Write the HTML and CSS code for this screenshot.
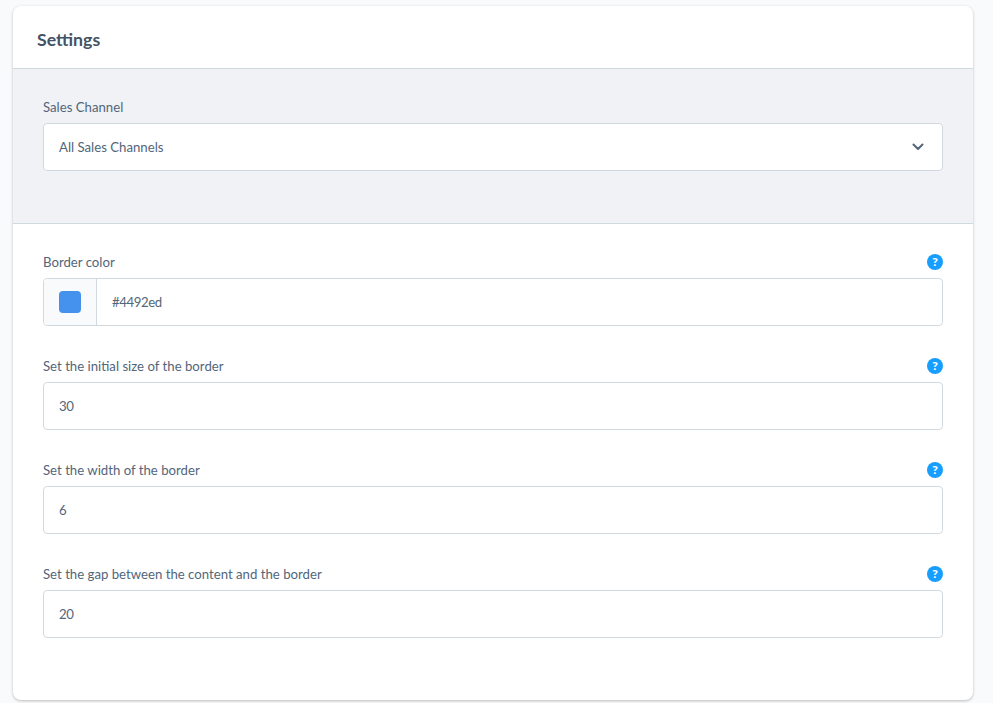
FILE: index.html
```html
<!DOCTYPE html>
<html lang="en">

<head>
    <meta charset="UTF-8">
    <meta name="viewport" content="width=device-width, initial-scale=1.0">
    <title>Settings</title>
    <link rel="stylesheet" href="styles.css">
</head>

<body>
    <div class="card">
        <div class="card-header">
            <h2>Settings</h2>
        </div>

        <div class="card-section section-grey">
            <div class="field">
                <div class="field-label">
                    <label for="salesChannel">Sales Channel</label>
                </div>
                <div class="field-box select-box">
                    <span id="salesChannel" class="field-value">All Sales Channels</span>
                    <svg class="chevron" width="12" height="8" viewBox="0 0 12 8">
                        <path d="M1.5 1.5 6 6l4.5-4.5" fill="none" stroke="#52667a" stroke-width="2" stroke-linecap="round" stroke-linejoin="round"/>
                    </svg>
                </div>
            </div>
        </div>

        <div class="card-section">
            <div class="field">
                <div class="field-label">
                    <label for="borderColor">Border color</label>
                    <span class="help">?</span>
                </div>
                <div class="field-box">
                    <div class="color-prefix"><span class="swatch"></span></div>
                    <span id="borderColor" class="field-value number">#4492ed</span>
                </div>
            </div>
            <div class="field">
                <div class="field-label">
                    <label for="initialSize">Set the initial size of the border</label>
                    <span class="help">?</span>
                </div>
                <div class="field-box">
                    <span id="initialSize" class="field-value number">30</span>
                </div>
            </div>
            <div class="field">
                <div class="field-label">
                    <label for="borderWidth">Set the width of the border</label>
                    <span class="help">?</span>
                </div>
                <div class="field-box">
                    <span id="borderWidth" class="field-value number">6</span>
                </div>
            </div>
            <div class="field">
                <div class="field-label">
                    <label for="borderGap">Set the gap between the content and the border</label>
                    <span class="help">?</span>
                </div>
                <div class="field-box">
                    <span id="borderGap" class="field-value number">20</span>
                </div>
            </div>
        </div>
    </div>
</body>

</html>
```

FILE: styles.css
```css
html,
body {
    height: 703px;
    overflow: hidden;
}

body {
    font-family: Lato, "Open Sans", sans-serif;
    font-size: 13.2px;
    color: #52667a;
    margin: 0;
    padding: 6px 20px 0 13px;
    box-sizing: border-box;
    background-color: #f9fafb;
}

.card {
    background-color: white;
    border-radius: 8px;
    box-shadow: 0 1px 3px rgba(0, 0, 0, 0.25);
    overflow: hidden;
}

.card-header {
    height: 63px;
    box-sizing: border-box;
    padding: 5px 24px 0;
    display: flex;
    align-items: center;
    border-bottom: 1px solid #d1d9e0;
}

h2 {
    margin: 0;
    font-size: 17.7px;
    font-weight: 700;
    color: #435366;
}

.card-section {
    padding: 30px;
}

.section-grey {
    padding-bottom: 20px;
    background-color: #f0f2f5;
    border-bottom: 1px solid #d1d9e0;
}

.field {
    margin-bottom: 32px;
}

.field-label {
    display: flex;
    justify-content: space-between;
    align-items: center;
    height: 16px;
    margin-bottom: 8px;
    line-height: 16px;
}

.help {
    width: 16px;
    height: 16px;
    border-radius: 50%;
    background-color: #189eff;
    color: white;
    font-size: 12px;
    font-weight: 900;
    text-align: center;
    line-height: 16px;
}

.field-box {
    display: flex;
    align-items: center;
    height: 48px;
    box-sizing: border-box;
    background-color: white;
    border: 1px solid #d1d9e0;
    border-radius: 4px;
    overflow: hidden;
}

.select-box {
    justify-content: space-between;
    padding-right: 18px;
}

.field-value {
    padding: 0 0 1px 15px;
}

.number {
    letter-spacing: -0.4px;
}

.color-prefix {
    width: 53px;
    height: 100%;
    box-sizing: border-box;
    display: flex;
    align-items: center;
    justify-content: center;
    background-color: #f9fafb;
    border-right: 1px solid #d1d9e0;
}

.swatch {
    width: 22px;
    height: 22px;
    border-radius: 4px;
    background-color: #4492ed;
}
```
